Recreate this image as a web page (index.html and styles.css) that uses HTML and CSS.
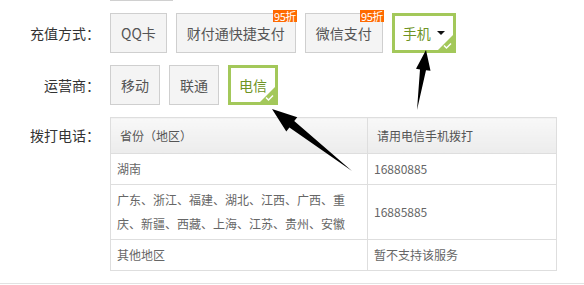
FILE: index.html
```html
<!DOCTYPE html>
<html lang="zh-CN">
<head>
  <meta charset="UTF-8">
  <title>充值</title>
  <link rel="stylesheet" href="styles.css">
</head>
<body>
  <div class="page">
    <div class="cut"></div>

    <div class="row">
      <div class="label">充值方式：</div>
      <div class="opts">
        <div class="opt">QQ卡</div>
        <div class="opt">财付通快捷支付<span class="badge">95折</span></div>
        <div class="opt">微信支付<span class="badge">95折</span></div>
        <div class="opt on">手机<span class="caret"></span>
          <svg class="tick" width="15" height="15" viewBox="0 0 15 15"><polygon points="15,0 15,15 0,15" fill="#a3c85a"/><polyline points="6,10.5 8.5,13 13,8.5" fill="none" stroke="#fff" stroke-width="1.5"/></svg>
        </div>
      </div>
    </div>

    <div class="row">
      <div class="label">运营商：</div>
      <div class="opts">
        <div class="opt">移动</div>
        <div class="opt">联通</div>
        <div class="opt on">电信
          <svg class="tick" width="15" height="15" viewBox="0 0 15 15"><polygon points="15,0 15,15 0,15" fill="#a3c85a"/><polyline points="6,10.5 8.5,13 13,8.5" fill="none" stroke="#fff" stroke-width="1.5"/></svg>
        </div>
      </div>
    </div>

    <div class="row top">
      <div class="label head">拨打电话：</div>
      <table class="dial">
        <thead>
          <tr><th class="c1">省份（地区）</th><th>请用电信手机拨打</th></tr>
        </thead>
        <tbody>
          <tr><td>湖南</td><td>16880885</td></tr>
          <tr><td>广东、浙江、福建、湖北、江西、广西、重庆、新疆、西藏、上海、江苏、贵州、安徽</td><td>16885885</td></tr>
          <tr><td>其他地区</td><td>暂不支持该服务</td></tr>
        </tbody>
      </table>
    </div>

    <div class="foot"></div>

    <!-- annotation arrows -->
    <svg class="marks" width="584" height="285" viewBox="0 0 584 285">
      <polygon points="272,109 297.3,117.2 294.2,121.1 352,171 289.4,127.5 286.3,131.4" fill="#000"/>
      <polygon points="426,50 430.5,70.8 426,70.2 417,110 420,69.4 416,68.8" fill="#000"/>
    </svg>
  </div>
</body>
</html>
```

FILE: styles.css
```css
body {
  margin: 0;
  background: #fff;
  font-family: "Noto Sans CJK SC", "Liberation Sans", sans-serif;
  font-size: 14px;
  color: #333;
}

.page {
  position: relative;
  width: 584px;
  height: 285px;
  overflow: hidden;
}

.cut {
  width: 63px;
  margin-left: 110px;
  border-top: 1px solid #d0d0d0;
}

.row {
  display: flex;
  align-items: center;
  margin-top: 12px;
}

.row.top {
  align-items: flex-start;
}

.label {
  width: 100px;
  margin-right: 10px;
  text-align: right;
  color: #333;
  white-space: nowrap;
}

.label.head {
  line-height: 36px;
}

.opts {
  display: flex;
  gap: 9px;
}

.opt {
  position: relative;
  box-sizing: border-box;
  height: 40px;
  padding: 0 10px;
  display: flex;
  align-items: center;
  background: #f4f4f4;
  border: 1px solid #cfcfcf;
  color: #555;
  white-space: nowrap;
}

.opt.on {
  padding: 0 8px;
  background: #fff;
  border: 3px solid #a3c85a;
  color: #6e9424;
}

.badge {
  position: absolute;
  top: -4px;
  right: -2px;
  padding: 0 1px;
  background: #ff6a00;
  color: #fff;
  font-size: 11px;
  line-height: 12px;
  letter-spacing: -0.5px;
}

.caret {
  width: 0;
  height: 0;
  margin-left: 6px;
  border-left: 4px solid transparent;
  border-right: 4px solid transparent;
  border-top: 4px solid #111;
}

.tick {
  position: absolute;
  right: 0;
  bottom: 0;
}

.dial {
  width: 447px;
  border-collapse: collapse;
  font-size: 12px;
  color: #666;
}

.dial th,
.dial td {
  border: 1px solid #dedede;
  text-align: left;
  font-weight: normal;
}

.dial th {
  height: 35px;
  padding: 0 9px;
  background: linear-gradient(#f8f8f8, #ececec);
  color: #555;
}

.dial th.c1 {
  width: 238px;
}

.dial td {
  padding: 3px 6px;
  line-height: 24px;
}

.foot {
  margin-top: 12px;
  border-top: 1px solid #e2e2e2;
}

.marks {
  position: absolute;
  left: 0;
  top: 0;
  pointer-events: none;
}
```
